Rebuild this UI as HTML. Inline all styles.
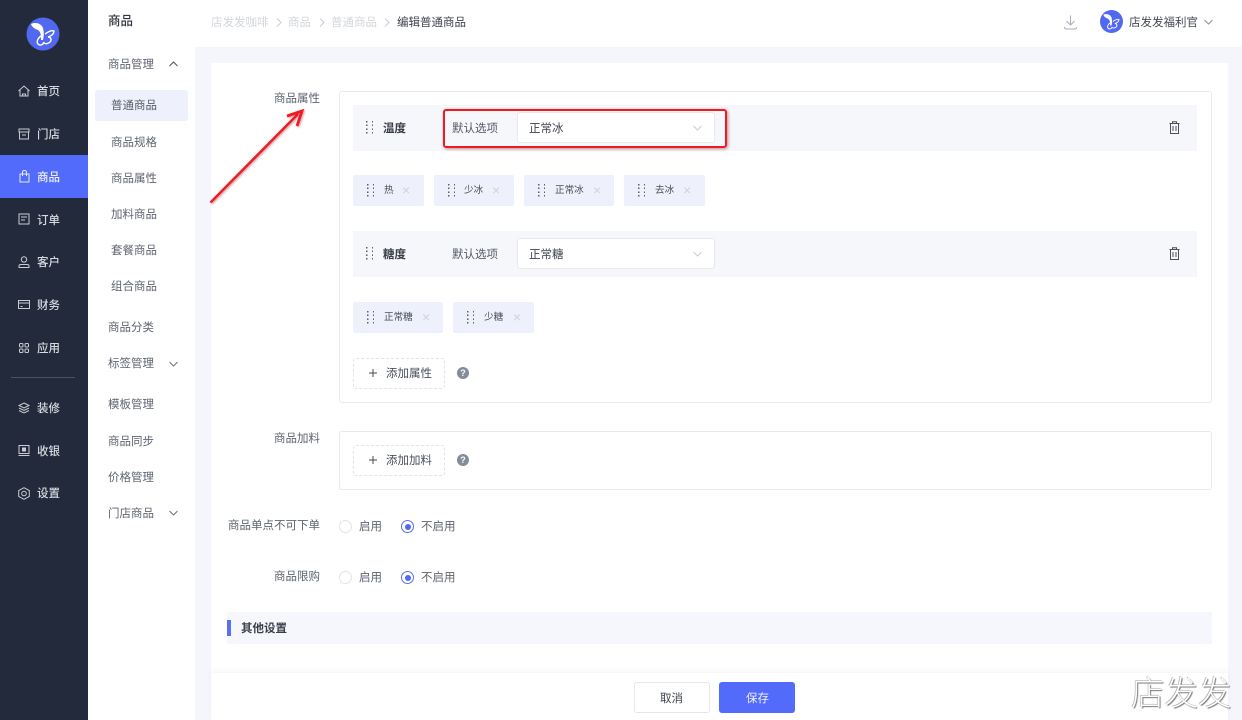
<!DOCTYPE html>
<html lang="zh"><head><meta charset="utf-8"><title>编辑普通商品</title>
<style>
*{box-sizing:border-box;margin:0;padding:0}
html,body{width:1242px;height:720px;overflow:hidden;background:#f5f6fb}
body{position:relative;font-family:"Liberation Sans","Noto Sans CJK SC",sans-serif;font-size:11.5px;color:#4a4f5c;filter:blur(.25px)}
.a{position:absolute}
.t{position:absolute;white-space:nowrap;line-height:16px;height:16px;margin-top:1px}
.side{left:0;top:0;width:88px;height:720px;background:#232a3b}
.sub{left:88px;top:0;width:107px;height:720px;background:#fff}
.top{left:195px;top:0;width:1047px;height:47px;background:#fff}
.card{left:211px;top:63px;width:1017px;height:657px;background:#fff}
.m{color:#d3d6dc;font-size:11.5px}
.n{color:#5e6470}
.x{font-size:14px;color:#d0d3da}
.f{font-size:9.6px;color:#4a4f5c}
.box{position:absolute;background:#fff;border:1px solid #e8e9ee;border-radius:3px}
.band{position:absolute;left:353px;width:844px;height:46px;background:#f6f7fb}
.sel{position:absolute;left:517px;width:198px;height:31px;background:#fff;border:1px solid #e8e9ee;border-radius:3px}
.tag{position:absolute;height:31px;top:0;background:#eef0fb;border-radius:2px}
.add{position:absolute;left:353px;width:92px;height:31px;border:1px dashed #e1e3e8;border-radius:3px;background:#fff}
.l{color:#d6d9df;left:37px;font-size:11.5px;font-weight:500}
.dg{position:absolute;width:7px;height:13px;background:repeating-linear-gradient(#5b5f6a 0 1.5px,transparent 1.5px 3.7px) 0 0/1.5px 100% no-repeat,repeating-linear-gradient(#5b5f6a 0 1.5px,transparent 1.5px 3.7px) 100% 0/1.5px 100% no-repeat}
svg{position:absolute;overflow:visible}
.ico{fill:none;stroke:#c9ccd3;stroke-width:1}
.q{position:absolute;width:12px;height:12px;border-radius:50%;background:#858c99;color:#fff;font-size:9px;line-height:12px;text-align:center;font-weight:700}
.r0{position:absolute;left:339px;width:13px;height:13px;border:1px solid #e3e4e8;border-radius:50%;background:#fff}
.r1{position:absolute;left:401px;width:13px;height:13px;border:1px solid #5a6ff0;border-radius:50%;background:#fff}
.r1:after{content:"";position:absolute;left:2.5px;top:2.5px;width:6px;height:6px;background:#5069f2;border-radius:50%}
</style></head><body>

<div class="a side"></div>
<div class="a" style="left:0;top:155px;width:88px;height:43px;background:#536bfa"></div>
<svg style="left:25.500px;top:16.500px" width="34" height="34" viewBox="0 0 34 34"><circle cx="17" cy="17" r="16.500" fill="#5269ef"/><path d="M5 7C9 5 15 6 17 11c1 4 1 8 0 12h-2c0-4 0-8-3-10C9 12 6 10 5 7z" fill="#fff"/><path d="M15 19c-3 2-5 6-3 8s5 1 6-2M19 17c3-2 6-4 9-3 0 3-3 5-6 6 3 0 4 3 2 5s-5 2-6 1" fill="none" stroke="#fff" stroke-width="1.400"/></svg>

<svg class="ico" style="left:18px;top:85px" width="12" height="12" viewBox="0 0 12 12"><path d="M.5 6 6 1l5.500 5M2 5v6h8V5M4.500 11V9h3v2"/></svg>
<div class="t l" style="top:83px">首页</div>
<svg class="ico" style="left:18px;top:128px" width="12" height="12" viewBox="0 0 12 12"><path d="M1 1h10v3H1zM1.500 4v7h9V4M4 7h4"/></svg>
<div class="t l" style="top:126px">门店</div>
<svg class="ico" style="left:19px;top:170px;stroke:#e6e9fd" width="11" height="13" viewBox="0 0 11 13"><path d="M1 4h9v8H1zM3.500 6V2.500q0-2 2-2t2 2V6"/></svg>
<div class="t l" style="top:169px;color:#eef0ff">商品</div>
<svg class="ico" style="left:18px;top:213px" width="12" height="12" viewBox="0 0 12 12"><path d="M1 1h10v10H1zM3 4h6M3 7h4"/></svg>
<div class="t l" style="top:212px">订单</div>
<svg class="ico" style="left:18px;top:256px" width="12" height="12" viewBox="0 0 12 12"><circle cx="6" cy="3.500" r="2.700"/><path d="M1 11.500V10q0-1.500 2-1.500h6q2 0 2 1.500v1.500z"/></svg>
<div class="t l" style="top:254px">客户</div>
<svg class="ico" style="left:18px;top:300px" width="12" height="10" viewBox="0 0 12 10"><path d="M.5.500h11v8H.5zM.5 3h11M2.500 6.500h2"/></svg>
<div class="t l" style="top:297px">财务</div>
<svg class="ico" style="left:19px;top:343px" width="10" height="10" viewBox="0 0 10 10"><rect x=".5" y=".5" width="3.500" height="3.500" rx="1"/><rect x="6" y=".5" width="3.500" height="3.500" rx="1"/><rect x=".5" y="6" width="3.500" height="3.500" rx="1"/><rect x="6" y="6" width="3.500" height="3.500" rx="1"/></svg>
<div class="t l" style="top:340px">应用</div>
<div class="a" style="left:11px;top:377px;width:64px;height:1px;background:#4a5163"></div>
<svg class="ico" style="left:18px;top:402px" width="12" height="12" viewBox="0 0 12 12"><path d="M6 1 11 3.500 6 6 1 3.500zM1 6l5 2.500L11 6M1 8.500 6 11l5-2.500"/></svg>
<div class="t l" style="top:400px">装修</div>
<svg class="ico" style="left:18px;top:445px" width="12" height="11" viewBox="0 0 12 11"><path d="M1 .5h10v8H1zM.5 10.500h11"/><path d="M4.500 3h3v3h-3z" fill="#c9ccd3"/></svg>
<div class="t l" style="top:443px">收银</div>
<svg class="ico" style="left:18px;top:487px" width="12" height="13" viewBox="0 0 12 13"><path d="M6 .7 11.300 3.600v5.800L6 12.300.7 9.400V3.600z"/><circle cx="6" cy="6.500" r="2.300"/></svg>
<div class="t l" style="top:485px">设置</div>

<div class="a sub"></div>
<div class="t" style="left:108px;top:12px;font-size:12.500px;font-weight:500;color:#2f333d">商品</div>
<div class="t n" style="left:108px;top:56px">商品管理</div>
<svg class="ico" style="left:169px;top:61px;stroke:#4a4f5c" width="9" height="6"><path d="M.5 5 4.500 1l4 4"/></svg>
<div class="a" style="left:95px;top:90px;width:93px;height:31px;background:#eef0fb;border-radius:3px"></div>
<div class="t" style="left:111px;top:97px;color:#555b68">普通商品</div>
<div class="t n" style="left:111px;top:134px">商品规格</div>
<div class="t n" style="left:111px;top:170px">商品属性</div>
<div class="t n" style="left:111px;top:206px">加料商品</div>
<div class="t n" style="left:111px;top:242px">套餐商品</div>
<div class="t n" style="left:111px;top:278px">组合商品</div>
<div class="t n" style="left:108px;top:319px">商品分类</div>
<div class="t n" style="left:108px;top:355px">标签管理</div>
<svg class="ico" style="left:169px;top:361px;stroke:#6c717c" width="9" height="6"><path d="M.5 1l4 4 4-4"/></svg>
<div class="t n" style="left:108px;top:396px">模板管理</div>
<div class="t n" style="left:108px;top:433px">商品同步</div>
<div class="t n" style="left:108px;top:469px">价格管理</div>
<div class="t n" style="left:108px;top:505px">门店商品</div>
<svg class="ico" style="left:169px;top:510px;stroke:#6c717c" width="9" height="6"><path d="M.5 1l4 4 4-4"/></svg>

<div class="a top"></div>
<div class="t m" style="left:211px;top:14px">店发发咖啡</div>
<svg class="ico" style="left:276px;top:18px" width="6" height="9"><path d="M1 .5l4 4-4 4"/></svg>
<div class="t m" style="left:288px;top:14px">商品</div>
<svg class="ico" style="left:319px;top:18px" width="6" height="9"><path d="M1 .5l4 4-4 4"/></svg>
<div class="t m" style="left:331px;top:14px">普通商品</div>
<svg class="ico" style="left:384px;top:18px" width="6" height="9"><path d="M1 .5l4 4-4 4"/></svg>
<div class="t" style="left:397px;top:14px;color:#3e424d">编辑普通商品</div>
<svg class="ico" style="left:1064px;top:15px;stroke:#a9adb6" width="13" height="15" viewBox="0 0 13 15"><path d="M6.500.5v9M2.500 6l4 4 4-4M.5 12q0 2 1.500 2h9q1.500 0 1.500-2"/></svg>
<svg style="left:1100px;top:10px" width="23" height="23" viewBox="0 0 34 34"><circle cx="17" cy="17" r="17" fill="#5269ef"/><path d="M5 7C9 5 15 6 17 11c1 4 1 8 0 12h-2c0-4 0-8-3-10C9 12 6 10 5 7z" fill="#fff"/><path d="M15 19c-3 2-5 6-3 8s5 1 6-2M19 17c3-2 6-4 9-3 0 3-3 5-6 6 3 0 4 3 2 5s-5 2-6 1" fill="none" stroke="#fff" stroke-width="1.400"/></svg>
<div class="t" style="left:1129px;top:14px;color:#444853">店发发福利官</div>
<svg class="ico" style="left:1204px;top:19px;stroke:#8a8f9a" width="9" height="6"><path d="M.5 1l4 4 4-4"/></svg>

<div class="a card"></div>

<div class="t n" style="left:274px;top:90px">商品属性</div>
<div class="box" style="left:339px;top:91px;width:873px;height:312px"></div>

<div class="band" style="top:105px"></div>
<div class="dg" style="left:366px;top:121px"></div>
<div class="t" style="left:383px;top:120px;font-weight:700;color:#3a3e48">温度</div>
<div class="t" style="left:452px;top:120px;color:#555a66">默认选项</div>
<div class="sel" style="top:112px"></div>
<div class="t" style="left:529px;top:120px;color:#3e424d">正常冰</div>
<svg class="ico" style="left:693px;top:125px" width="9" height="6"><path d="M.5 1l4 4 4-4"/></svg>
<svg class="ico" style="left:1169px;top:121px;stroke:#4a4f5c" width="11" height="13" viewBox="0 0 11 13"><path d="M.5 2.500h10M3.500 2.500V.8h4v1.700M1.500 2.500v10h8v-10M4 5v5M7 5v5"/></svg>
<div class="a" style="left:443px;top:109px;width:284px;height:39px;border:2px solid #ec1c24;border-radius:3px;box-shadow:1px 1px 3px rgba(120,0,0,.45)"></div>

<div class="a" style="left:353px;top:175px;width:0;height:31px">
<div class="tag" style="left:0;width:71px"></div>
<div class="tag" style="left:81px;width:80px"></div>
<div class="tag" style="left:171px;width:90px"></div>
<div class="tag" style="left:271px;width:81px"></div>
</div>
<div class="dg" style="left:367px;top:184px"></div>
<div class="t f" style="left:384px;top:182px">热</div>
<div class="t x" style="left:402px;top:181px">×</div>
<div class="dg" style="left:448px;top:184px"></div>
<div class="t f" style="left:464px;top:182px">少冰</div>
<div class="t x" style="left:492px;top:181px">×</div>
<div class="dg" style="left:538px;top:184px"></div>
<div class="t f" style="left:555px;top:182px">正常冰</div>
<div class="t x" style="left:593px;top:181px">×</div>
<div class="dg" style="left:638px;top:184px"></div>
<div class="t f" style="left:655px;top:182px">去冰</div>
<div class="t x" style="left:683px;top:181px">×</div>

<div class="band" style="top:231px"></div>
<div class="dg" style="left:366px;top:247px"></div>
<div class="t" style="left:383px;top:246px;font-weight:700;color:#3a3e48">糖度</div>
<div class="t" style="left:452px;top:246px;color:#555a66">默认选项</div>
<div class="sel" style="top:238px"></div>
<div class="t" style="left:529px;top:246px;color:#3e424d">正常糖</div>
<svg class="ico" style="left:693px;top:251px" width="9" height="6"><path d="M.5 1l4 4 4-4"/></svg>
<svg class="ico" style="left:1169px;top:247px;stroke:#4a4f5c" width="11" height="13" viewBox="0 0 11 13"><path d="M.5 2.500h10M3.500 2.500V.8h4v1.700M1.500 2.500v10h8v-10M4 5v5M7 5v5"/></svg>

<div class="a" style="left:353px;top:302px;width:0;height:31px">
<div class="tag" style="left:0;width:90px"></div>
<div class="tag" style="left:100px;width:81px"></div>
</div>
<div class="dg" style="left:367px;top:311px"></div>
<div class="t f" style="left:384px;top:309px">正常糖</div>
<div class="t x" style="left:422px;top:308px">×</div>
<div class="dg" style="left:467px;top:311px"></div>
<div class="t f" style="left:484px;top:309px">少糖</div>
<div class="t x" style="left:513px;top:308px">×</div>

<div class="add" style="top:358px"></div>
<svg class="ico" style="left:369px;top:369px;stroke:#444853" width="8" height="8"><path d="M4 0v8M0 4h8"/></svg>
<div class="t" style="left:386px;top:365px">添加属性</div>
<div class="q" style="left:457px;top:367px">?</div>

<div class="t n" style="left:274px;top:430px">商品加料</div>
<div class="box" style="left:339px;top:431px;width:873px;height:59px"></div>
<div class="add" style="top:445px"></div>
<svg class="ico" style="left:369px;top:456px;stroke:#444853" width="8" height="8"><path d="M4 0v8M0 4h8"/></svg>
<div class="t" style="left:386px;top:452px">添加加料</div>
<div class="q" style="left:457px;top:454px">?</div>

<div class="t n" style="left:228px;top:517px">商品单点不可下单</div>
<div class="r0" style="top:520px"></div>
<div class="t n" style="left:359px;top:518px">启用</div>
<div class="r1" style="top:520px"></div>
<div class="t n" style="left:421px;top:518px">不启用</div>

<div class="t n" style="left:274px;top:568px">商品限购</div>
<div class="r0" style="top:571px"></div>
<div class="t n" style="left:359px;top:569px">启用</div>
<div class="r1" style="top:571px"></div>
<div class="t n" style="left:421px;top:569px">不启用</div>

<div class="a" style="left:227px;top:612px;width:985px;height:32px;background:#f6f7fd"></div>
<div class="a" style="left:227px;top:620px;width:4px;height:16px;background:#5a6ff5"></div>
<div class="t" style="left:241px;top:620px;font-weight:700;color:#3a3e48">其他设置</div>

<div class="a" style="left:211px;top:673px;width:1017px;height:47px;background:#fff;box-shadow:0 -3px 6px rgba(60,60,80,.04)"></div>
<div class="a" style="left:634px;top:682px;width:76px;height:31px;background:#fff;border:1px solid #e6e7ec;border-radius:3px"></div>
<div class="t" style="left:660px;top:690px;color:#3e424d">取消</div>
<div class="a" style="left:719px;top:682px;width:76px;height:31px;background:#536bfa;border-radius:3px"></div>
<div class="t" style="left:746px;top:690px;color:#f0f2ff">保存</div>

<svg style="left:205px;top:105px;filter:drop-shadow(1px 1px 1px rgba(120,0,0,.4))" width="105" height="105" viewBox="0 0 105 105"><path d="M5.500 97.500 93 9" stroke="#f01c24" stroke-width="2.500" fill="none"/><path d="M82 11 97 6 92 21" stroke="#f01c24" stroke-width="2.800" fill="none"/></svg>

<div class="t" style="left:1131px;top:675px;font-size:33.500px;line-height:38px;height:38px;color:#fff;text-shadow:1px 1px 1px #777,-.5px -.5px .5px #999;font-weight:300">店发发</div>
</body></html>
